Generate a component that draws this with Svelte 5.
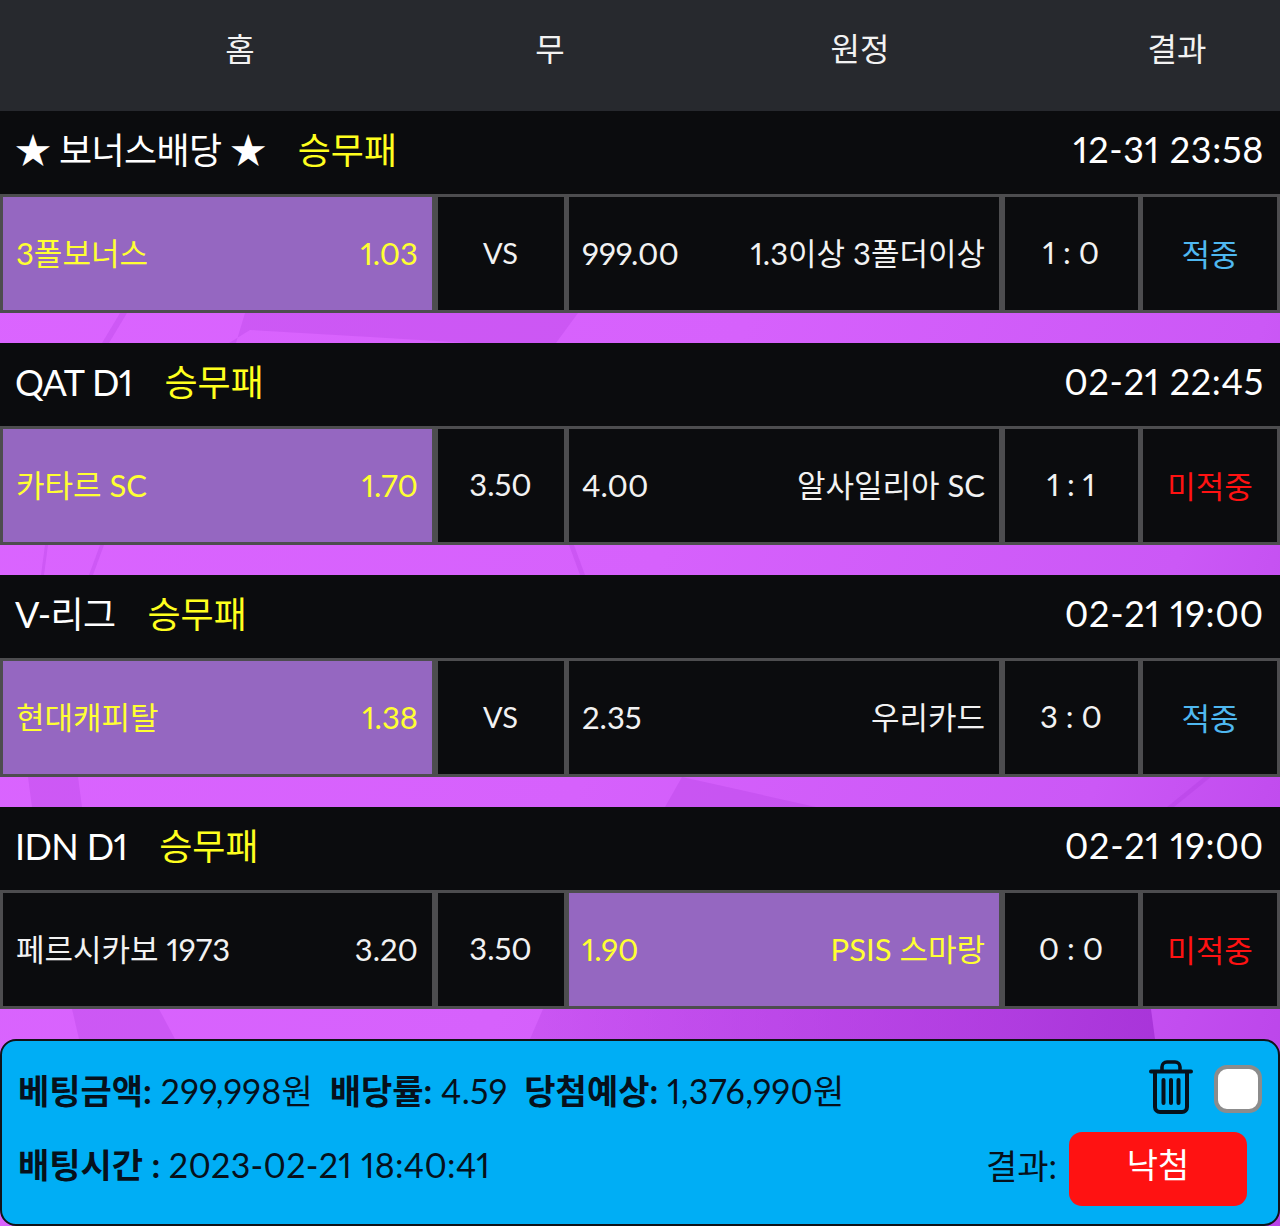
<script>
  const matches = [
    { league: '★ 보너스배당 ★', type: '승무패', time: '12-31 23:58', home: '3폴보너스', homeOdd: '1.03', draw: 'VS', awayOdd: '999.00', away: '1.3이상 3폴더이상', score: '1 : 0', result: '적중', pick: 'home' },
    { league: 'QAT D1', type: '승무패', time: '02-21 22:45', home: '카타르 SC', homeOdd: '1.70', draw: '3.50', awayOdd: '4.00', away: '알사일리아 SC', score: '1 : 1', result: '미적중', pick: 'home' },
    { league: 'V-리그', type: '승무패', time: '02-21 19:00', home: '현대캐피탈', homeOdd: '1.38', draw: 'VS', awayOdd: '2.35', away: '우리카드', score: '3 : 0', result: '적중', pick: 'home' },
    { league: 'IDN D1', type: '승무패', time: '02-21 19:00', home: '페르시카보 1973', homeOdd: '3.20', draw: '3.50', awayOdd: '1.90', away: 'PSIS 스마랑', score: '0 : 0', result: '미적중', pick: 'away' }
  ];
</script>

<div class="page">
  <svg class="facets" viewBox="0 0 1280 1226" aria-hidden="true">
    <defs>
      <linearGradient id="deep" x1="0" y1="0" x2="1" y2="0">
        <stop offset="0" stop-color="#a02cd2" stop-opacity="0.2" />
        <stop offset="1" stop-color="#a02cd2" stop-opacity="0.75" />
      </linearGradient>
    </defs>
    <polygon points="120,313 127,313 109,343 102,343" />
    <polygon points="245,313 578,313 556,343 470,343 370,337 250,330 229,343 236,343" />
    <polygon points="45,545 48,545 44,575 41,575" />
    <polygon points="100,545 104,545 93,575 89,575" />
    <polygon points="569,545 574,545 585,575 580,575" />
    <polygon points="28,777 78,777 82,807 32,807" />
    <polygon points="682,777 816,807 665,807" />
    <polygon points="1204,777 1211,777 1174,807 1167,807" />
    <polygon points="72,1009 159,1009 175,1039 79,1039" />
    <polygon class="deep" points="543,1009 1151,1009 1155,1039 530,1039" />
  </svg>

  <header class="head">
    <span class="h-home">홈</span>
    <span class="h-draw">무</span>
    <span class="h-away">원정</span>
    <span class="h-res">결과</span>
  </header>

  {#each matches as m}
    <section class="match">
      <div class="title">
        <div class="league"><span class="name">{m.league}</span><span class="type">{m.type}</span></div>
        <div class="time">{m.time}</div>
      </div>
      <div class="row">
        <div class="cell side" class:picked={m.pick === 'home'}><span>{m.home}</span><span class="odd">{m.homeOdd}</span></div>
        <div class="cell mid" class:vs={m.draw === 'VS'}>{m.draw}</div>
        <div class="cell side" class:picked={m.pick === 'away'}><span class="odd">{m.awayOdd}</span><span>{m.away}</span></div>
        <div class="cell mid score">{m.score}</div>
        <div class="cell mid res" class:hit={m.result === '적중'} class:miss={m.result !== '적중'}>{m.result}</div>
      </div>
    </section>
  {/each}

  <footer class="foot">
    <div class="line">
      <div class="info">
        <b>베팅금액:</b> <span class="v">299,998원</span>
        <b>배당률:</b> <span class="v">4.59</span>
        <b>당첨예상:</b> <span class="v">1,376,990원</span>
      </div>
      <div class="tools">
        <svg class="trash" viewBox="0 0 44 54" aria-hidden="true">
          <path d="M2 11.5h40" stroke-width="4" />
          <path d="M13 10V7a5 5 0 0 1 5-5h8a5 5 0 0 1 5 5v3" stroke-width="3.6" />
          <path d="M6 13v34a5 5 0 0 0 5 5h22a5 5 0 0 0 5-5V13" stroke-width="4" />
          <path d="M14.500 20v23M22 20v23M29.500 20v23" stroke-width="4" />
        </svg>
        <span class="check"></span>
      </div>
    </div>
    <div class="line second">
      <div class="info"><b>배팅시간 :</b> <span class="v">2023-02-21 18:40:41</span></div>
      <div class="outcome"><span class="lbl">결과:</span><span class="btn">낙첨</span></div>
    </div>
  </footer>
</div>

<style>
  :global(body) {
    margin: 0;
    background: #0b0c0e;
  }
  .page {
    position: relative;
    width: 1280px;
    height: 1226px;
    overflow: hidden;
    background: linear-gradient(110deg, #db65ff 0%, #d661fc 50%, #cb58f6 80%, #b942e8 100%);
    font-family: Lato, "Noto Sans CJK KR", sans-serif;
    font-feature-settings: "pnum" 1;
    color: #fff;
  }
  .facets {
    position: absolute;
    inset: 0;
    width: 1280px;
    height: 1226px;
  }
  .facets polygon {
    fill: #a02cd2;
    opacity: 0.2;
  }
  .facets polygon.deep {
    fill: url(#deep);
    opacity: 1;
  }
  .head {
    position: relative;
    display: grid;
    grid-template-columns: 480px 140px 480px 1fr;
    height: 111px;
    background: #27292e;
    font-size: 32px;
    line-height: 98px;
    text-align: center;
    color: #f2f2f2;
  }
  .h-res { padding-right: 26px; }
  .match {
    position: relative;
    height: 232px;
    display: flex;
    flex-direction: column;
  }
  .title {
    display: flex;
    justify-content: space-between;
    align-items: center;
    box-sizing: border-box;
    height: 83px;
    padding: 0 17px 8px 15px;
    background: #0b0c0e;
    font-size: 36px;
  }
  .league {
    display: flex;
    align-items: baseline;
    gap: 32px;
    margin-top: -1px;
  }
  .name { letter-spacing: -0.6px; }
  .time { letter-spacing: 0.7px; margin-right: -1px; }
  .type { color: #ffff1e; }
  .row {
    display: grid;
    grid-template-columns: 429px 126px 430px 133px 134px;
    column-gap: 5.5px;
    box-sizing: border-box;
    height: 119px;
    padding: 3px;
    background: #4d4d4f;
    font-size: 31px;
  }
  .cell {
    display: flex;
    align-items: center;
    box-sizing: border-box;
    padding-bottom: 3px;
    background: #0b0c0e;
    color: #f2f2f2;
  }
  .side {
    justify-content: space-between;
    align-items: baseline;
    padding: 32px 14px 0 13px;
  }
  .mid { justify-content: center; }
  .vs { font-size: 29px; }
  .picked {
    background: #9567c1;
    color: #ffff33;
  }
  .hit { color: #4fb8f0; }
  .miss { color: #ff1212; }
  .foot {
    position: absolute;
    left: 0;
    right: 0;
    top: 1039px;
    box-sizing: border-box;
    height: 187px;
    padding: 0 16px;
    background: #00aef5;
    border: 2.5px solid #101318;
    border-radius: 16px;
    color: #06111c;
    font-size: 34px;
  }
  .line {
    display: flex;
    justify-content: space-between;
    align-items: center;
    height: 74px;
    margin-top: 11px;
  }
  .second { margin-top: 6px; padding-right: 15px; }
  .second .info { margin-top: -12px; }
  .lbl { margin-top: -10px; }
  .v { letter-spacing: 0.3px; }
  .info b { font-weight: 700; margin-left: 8px; }
  .info b:first-child { margin-left: 0; }
  .tools {
    display: flex;
    align-items: center;
    gap: 21px;
  }
  .trash {
    width: 44px;
    height: 54px;
    margin-top: -5px;
    fill: none;
    stroke: #06111c;
    stroke-linecap: round;
  }
  .check {
    box-sizing: border-box;
    width: 48px;
    height: 48px;
    background: #fff;
    border: 4px solid #8c8c8c;
    border-radius: 13px;
  }
  .outcome {
    display: flex;
    align-items: center;
    gap: 12px;
  }
  .btn {
    width: 178px;
    height: 74px;
    border-radius: 13px;
    background: #ff1212;
    color: #fff;
    text-align: center;
    line-height: 66px;
    font-size: 34px;
  }
</style>
